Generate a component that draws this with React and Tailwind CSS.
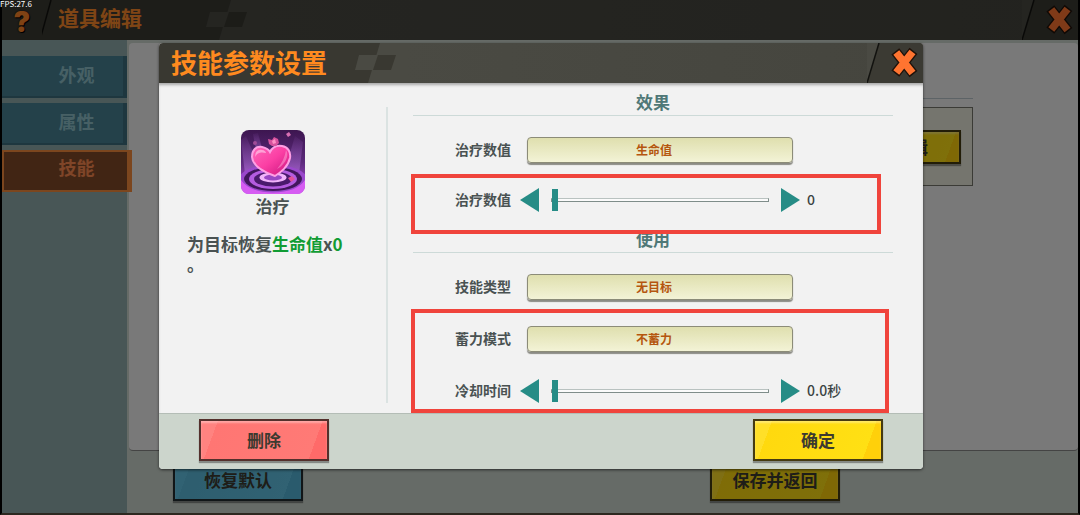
import React, { useState } from "react";

const tabs = ["外观", "属性", "技能"];

const CloseIcon = () => (
  <svg viewBox="0 0 56 40" className="block w-14 h-10" aria-hidden="true">
    <polygon points="12,0 56,0 56,40 0,40" fill="#3b3a33" />
    <line x1="12" y1="0" x2="0" y2="40" stroke="#12120f" strokeWidth="1.5" />
    <g fill="none">
      <path d="M28.3 8.3L46.5 31.2M46.5 7.8L28.3 30.7" stroke="#1f120a" strokeWidth="10" />
      <path d="M29.3 9.5L45.5 30M45.5 9L29.3 29.5" stroke="#ff7430" strokeWidth="7.5" />
    </g>
  </svg>
);

// Checkered flag pattern between the title and the lighter half of the bar
const Checker = () => (
  <svg viewBox="0 0 50 40" className="block w-[50px] h-10 shrink-0" aria-hidden="true">
    <polygon points="30,0 50,0 50,40 18,40" fill="#4a4a43" />
    <polygon points="9,12 28,12 23,27 5,27" fill="#4a4a43" />
    <polygon points="28,12 46,12 41,27 23,27" fill="#393831" />
  </svg>
);

const HealIcon = () => (
  <svg viewBox="0 0 64 64" className="block w-16 h-16 rounded-lg" role="img" aria-label="治疗">
    <defs>
      <linearGradient id="healBg" x1="0" y1="0" x2="0" y2="1">
        <stop offset="0" stopColor="#3d1650" />
        <stop offset="0.5" stopColor="#5c2a7c" />
        <stop offset="1" stopColor="#b450e0" />
      </linearGradient>
      <linearGradient id="healHeart" x1="0" y1="0" x2="1" y2="1">
        <stop offset="0" stopColor="#ff6cbc" />
        <stop offset="0.5" stopColor="#fb3fa4" />
        <stop offset="1" stopColor="#c8127c" />
      </linearGradient>
      <linearGradient id="healRay" x1="0" y1="0" x2="0" y2="1">
        <stop offset="0" stopColor="#b070d8" stopOpacity="0.05" />
        <stop offset="1" stopColor="#b070d8" stopOpacity="0.6" />
      </linearGradient>
    </defs>
    <rect width="64" height="64" fill="url(#healBg)" />
    <polygon points="0,10 5,6 20,40 4,44" fill="url(#healRay)" />
    <polygon points="54,6 62,12 58,44 44,40" fill="url(#healRay)" />
    <polygon points="12,4 17,3 22,22 16,26" fill="url(#healRay)" />
    <ellipse cx="32" cy="49" rx="34" ry="14" fill="#9a48cc" />
    <ellipse cx="32" cy="49" rx="29" ry="12" fill="#41165c" />
    <ellipse cx="32" cy="49" rx="24" ry="10" fill="#b45ce0" />
    <ellipse cx="32" cy="49" rx="19" ry="7.5" fill="#4a1a6c" />
    <ellipse cx="32" cy="47.5" rx="13.5" ry="5" fill="#f0b4fa" />
    <ellipse cx="32" cy="47.5" rx="9" ry="3" fill="#9a48c4" />
    <path d="M0 50Q8 62 32 62.5Q56 62 64 50V64H0Z" fill="#d65cf2" />
    <path
      d="M34 46C22 42 12 36 11 27C11 20 15 16 21 17C25 18 28 20 29 22C31 18 35 15 41 16C47 17 50 22 49 28C47 37 40 42 34 46Z"
      fill="url(#healHeart)"
      stroke="#ff9fe4"
      strokeWidth="2"
    />
    <path d="M14.500 27C13.500 22 17 19 21 20C23.500 20 25 22 25 23C21 22 16 22 14.500 27Z" fill="#ffd3ee" opacity="0.6" />
    <path d="M45 20C47 23 47 28 43 33C41 36 38 38 36 39C41 33 44 27 45 20Z" fill="#ffa5d8" opacity="0.5" />
    <path d="M28 14L27 9L31 10L33 7L37 9L38 13L35 16L31 16Z" fill="#d8529e" />
    <path d="M31 11L34 9L35 13L32 14Z" fill="#ff8fc6" />
    <path d="M45 4L48 2L50 5L47 7Z" fill="#d870b4" />
    <circle cx="14" cy="13" r="2" fill="#a04c98" />
    <path d="M47 48L51 46L54 49L50 52Z" fill="#e0509c" />
  </svg>
);

const TitleBar = ({ title, titleClass, onClose }) => (
  <>
    <h2 className={titleClass}>{title}</h2>
    <Checker />
    <div className="flex-1 self-stretch bg-[#4a4a43]">
      <div className="h-full bg-linear-to-r from-transparent to-[#3f3f38]/40" />
    </div>
    <button type="button" aria-label="关闭" onClick={onClose} className="shrink-0 bg-[#4a4a43]">
      <CloseIcon />
    </button>
  </>
);

const buttonColors = {
  red: "border-[#54302c] bg-[linear-gradient(110deg,#ff8380_12%,#ff7673_12%,#ff7a76_87%,#ff6a69_87%)]",
  yellow: "border-[#453a10] bg-[linear-gradient(110deg,#ffdf28_12%,#ffd90e_12%,#ffe014_87%,#ffd00a_87%)]",
  blue: "border-[#222c30] bg-[linear-gradient(110deg,#62c4e6_12%,#5cbcde_12%,#62c4e6_87%,#54b6da_87%)]",
};

const GameButton = ({ color, className = "w-[130px] h-[42px]", children }) => (
  <button
    type="button"
    className={`border-2 text-[17px] leading-6 font-bold text-[#3c3a30] shadow-[inset_0_2px_2px_rgba(255,255,255,0.35),0_2px_1px_rgba(0,0,0,0.35)] ${buttonColors[color]} ${className}`}
  >
    {children}
  </button>
);

const Section = ({ title, children }) => (
  <section>
    <h3 className="h-[25px] border-b border-[#cddad8] text-center text-[17px] leading-[22px] font-bold text-[#4f7877]">
      {title}
    </h3>
    <div className="pt-5 pl-[42px]">{children}</div>
  </section>
);

const SelectRow = ({ id, label, value }) => (
  <div className="flex h-7 items-center">
    <label htmlFor={id} className="w-[72px] shrink-0 pb-[2px] text-sm font-bold text-[#4a5252]">
      {label}
    </label>
    <select
      id={id}
      defaultValue={value}
      className="h-[26px] w-[266px] appearance-none rounded-sm border border-[#8c8c78] bg-linear-to-b from-[#dfdfae] to-[#f3f3d6] pr-3 text-xs font-bold text-[#b5560f] shadow-[0_2px_1px_#8b8b84] [text-align-last:center]"
    >
      <option>{value}</option>
    </select>
  </div>
);

const SliderRow = ({ id, label, format, step }) => {
  const [value, setValue] = useState(0);

  const change = (amount) => {
    setValue((v) => Math.min(100, Math.max(0, v + amount)));
  };

  return (
    <div className="flex h-7 items-center">
      <label htmlFor={id} className="w-[65px] shrink-0 pb-[2px] text-sm font-bold text-[#4a5252]">
        {label}
      </label>
      <button type="button" aria-label="减少" onClick={() => change(-step)}>
        <svg viewBox="0 0 19 24" className="block h-6 w-[19px]">
          <polygon points="19,0 19,24 0,12" fill="#268c86" />
        </svg>
      </button>
      <input
        id={id}
        type="range"
        min="0"
        max="100"
        step={step}
        value={value}
        onChange={(e) => setValue(Number(e.target.value))}
        className="mx-3 h-6 w-[218px] appearance-none bg-transparent [&::-webkit-slider-runnable-track]:h-1 [&::-webkit-slider-runnable-track]:border [&::-webkit-slider-runnable-track]:border-[#7f8d8a] [&::-webkit-slider-runnable-track]:border-t-[#b9c2c0] [&::-webkit-slider-runnable-track]:bg-[#fbfbfb] [&::-webkit-slider-thumb]:-mt-[10px] [&::-webkit-slider-thumb]:h-[22px] [&::-webkit-slider-thumb]:w-[6px] [&::-webkit-slider-thumb]:appearance-none [&::-webkit-slider-thumb]:bg-[#268c86]"
      />
      <button type="button" aria-label="增加" onClick={() => change(step)}>
        <svg viewBox="0 0 19 24" className="block h-6 w-[19px]">
          <polygon points="0,0 0,24 19,12" fill="#268c86" />
        </svg>
      </button>
      <output htmlFor={id} className="ml-[7px] pb-[2px] text-sm font-medium text-[#3c4444]">
        {format(value)}
      </output>
    </div>
  );
};

const EditorPage = () => (
  <div className="flex flex-1 flex-col border-x-2 border-b-2 border-black border-b-[#5a5040] bg-[#909f9c]">
    <header className="flex h-10 items-center bg-[#3b3a33]">
      <button
        type="button"
        aria-label="帮助"
        className="w-10 pt-1 text-[28px] leading-6 font-black text-[#ff8428] font-['Inter',sans-serif] [text-shadow:0_0_2px_#000,1px_1px_0_#000]"
      >
        ?
      </button>
      <svg viewBox="0 0 12 40" className="h-10 w-3" aria-hidden="true">
        <line x1="9" y1="0" x2="-2" y2="40" stroke="#12120f" strokeWidth="1.5" />
      </svg>
      <TitleBar title="道具编辑" titleClass="pl-1 pr-[59px] pb-1 text-[21px] font-bold text-[#ff8a2a]" />
    </header>

    <div className="flex flex-1">
      <nav className="flex w-[125px] shrink-0 flex-col gap-[5px] bg-[#90adac] pt-4">
        {tabs.map((tab) => (
          <a
            key={tab}
            href="#"
            className={
              tab === "技能"
                ? "relative -mr-[5px] flex h-[42px] items-center justify-center border-2 border-r-[5px] border-[#f88c3c] bg-[#824a28] pb-2 pl-[22px] text-lg font-bold text-[#ff8a50]"
                : "flex h-[42px] items-center justify-center border-r-4 border-b-2 border-[#3c6e7e] bg-[#488294] pb-1 pl-7 text-lg font-bold text-[#8ec0ca]"
            }
          >
            {tab}
          </a>
        ))}
      </nav>

      <div className="flex flex-1 flex-col bg-[#ccd6ce] pl-[2px]">
        <main className="mt-[3px] flex-1 rounded-sm border-b border-[#888] bg-[#f2f2f2] pl-10 pr-[105px] pt-[55px]">
          <div className="border-t border-[#bac6cc] pt-2">
            <div className="flex h-[79px] items-center justify-end border border-[#77776c] bg-[#eaeadc] pr-[11px]">
              <GameButton color="yellow" className="h-[34px] w-[100px]">
                编辑
              </GameButton>
            </div>
          </div>
        </main>
        <footer className="flex h-[62px] justify-between pl-11 pr-[238px] pt-2">
          <GameButton color="blue">恢复默认</GameButton>
          <GameButton color="yellow">保存并返回</GameButton>
        </footer>
      </div>
    </div>
  </div>
);

const SkillDialog = ({ onClose }) => (
  <div
    role="dialog"
    aria-label="技能参数设置"
    className="flex w-full max-w-[764px] flex-col overflow-hidden rounded-sm bg-[#f2f2f2] shadow-[0_1px_3px_rgba(0,0,0,0.6)]"
  >
    <header className="flex h-10 items-center bg-[#393831]">
      <TitleBar
        title="技能参数设置"
        titleClass="pl-3 pr-[23px] pb-[2px] text-[26px] leading-[38px] font-bold text-[#ff8a1f]"
        onClose={onClose}
      />
    </header>

    <div className="flex h-[331px] border-b border-[#b4bdb6] shadow-[inset_0_3px_3px_-1px_rgba(0,0,0,0.3)]">
      <div className="mt-6 mb-[10px] w-[229px] shrink-0 border-r-2 border-[#dbe3e2] px-7 pt-[23px]">
        <div className="flex flex-col items-center">
          <HealIcon />
          <p className="text-[17px] leading-6 font-bold text-[#4a5252]">治疗</p>
        </div>
        <p className="mt-4 text-[17px] leading-5 font-bold whitespace-nowrap text-[#4a5252]">
          为目标恢复<span className="text-[#119c34]">生命值</span>x
          <span className="text-[#119c34]">0</span>
          <br />。
        </p>
      </div>

      <div className="flex flex-1 flex-col gap-[14px] pl-[25px] pr-[30px] pt-2">
        <Section title="效果">
          <div className="flex flex-col gap-[22px]">
            <SelectRow id="effect" label="治疗数值" value="生命值" />
            <div className="relative">
              <SliderRow id="amount" label="治疗数值" step={1} format={(v) => v} />
              <div className="pointer-events-none absolute -top-3 right-3 -bottom-5 -left-[44px] border-4 border-[#f0443c]" />
            </div>
          </div>
        </Section>

        <Section title="使用">
          <div className="flex flex-col gap-6">
            <SelectRow id="type" label="技能类型" value="无目标" />
            <div className="relative flex flex-col gap-6">
              <SelectRow id="charge" label="蓄力模式" value="不蓄力" />
              <SliderRow id="cooldown" label="冷却时间" step={0.5} format={(v) => `${v.toFixed(1)}秒`} />
              <div className="pointer-events-none absolute -top-4 right-1 -bottom-2 -left-[44px] border-4 border-[#f0443c]" />
            </div>
          </div>
        </Section>
      </div>
    </div>

    <footer className="flex justify-between bg-[#ccd5cc] px-10 pt-[5px] pb-2">
      <GameButton color="red">删除</GameButton>
      <GameButton color="yellow">确定</GameButton>
    </footer>
  </div>
);

const App = () => {
  const [open, setOpen] = useState(true);

  return (
    <div className="relative flex min-h-screen flex-col bg-black font-['Noto_Sans_CJK_SC','Noto_Sans',sans-serif]">
      <EditorPage />
      {open && (
        <div className="absolute inset-0 flex items-start justify-center bg-black/50 pt-[43px] pl-[2px]">
          <SkillDialog onClose={() => setOpen(false)} />
        </div>
      )}
      <span className="absolute top-0 left-0 text-[8px] leading-[8px] text-white">FPS:27.6</span>
    </div>
  );
};

export default App;
